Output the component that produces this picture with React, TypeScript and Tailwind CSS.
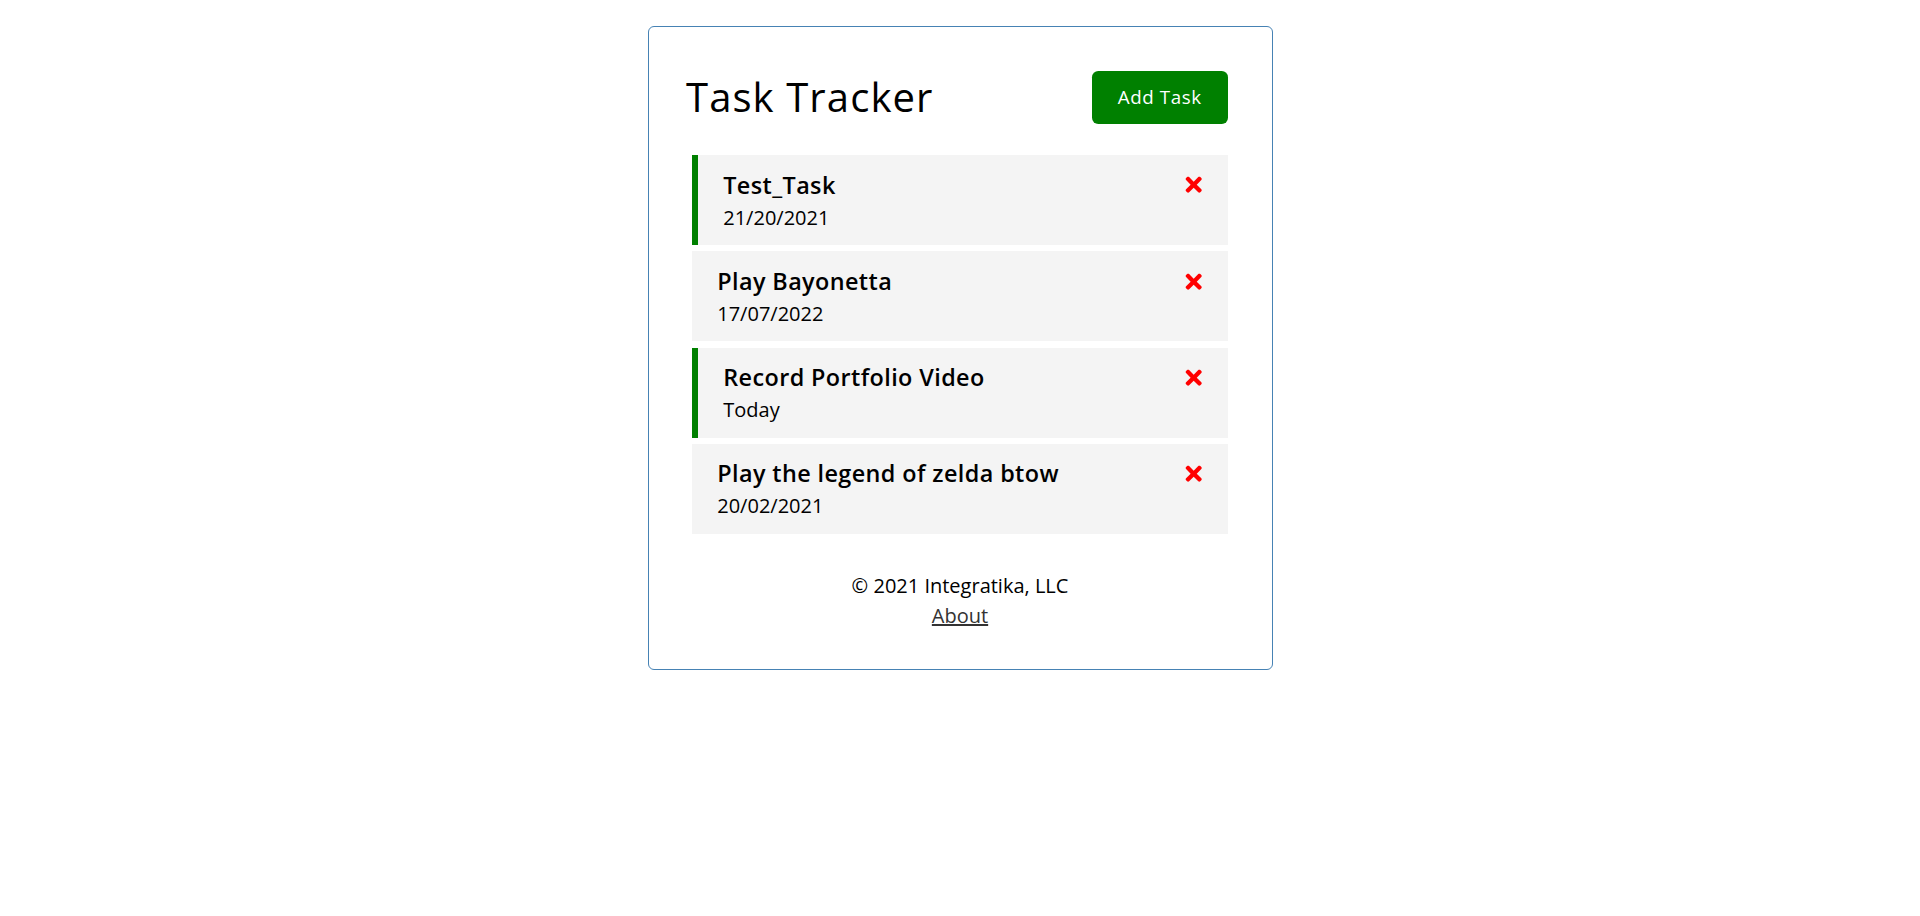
import React from "react";
import { FaTimes } from "react-icons/fa";

type Task = { id: number; text: string; day: string; reminder: boolean };

const tasks: Task[] = [
  { id: 1, text: "Test_Task", day: "21/20/2021", reminder: true },
  { id: 2, text: "Play Bayonetta", day: "17/07/2022", reminder: false },
  { id: 3, text: "Record Portfolio Video", day: "Today", reminder: true },
  { id: 4, text: "Play the legend of zelda btow", day: "20/02/2021", reminder: false },
];

export default function App() {
  return (
    <div className="min-h-[916px] bg-white text-black font-['Open_Sans','Noto_Sans',sans-serif]">
      <div className="w-[625px] mx-auto mt-[26px] border border-[#4682b4] rounded-[6px] p-[37.5px]">
        <header className="flex justify-between items-center mb-[25px]">
          <h1 className="text-[40px] leading-[60px] font-normal tracking-[1.1px]">Task Tracker</h1>
          <button className="m-[6.25px] w-[136px] h-[53px] bg-[#008000] text-white text-[18.75px] leading-[28px] tracking-[0.6px] rounded-[6.25px] cursor-pointer">
            Add Task
          </button>
        </header>
        <div className="flex flex-col gap-[6.25px] mx-[6.25px]">
          {tasks.map((t) => (
            <div
              key={t.id}
              className={
                t.reminder
                  ? "bg-[#f4f4f4] px-[25px] py-[12.5px] border-l-[6.25px] border-[#008000]"
                  : "bg-[#f4f4f4] px-[25px] py-[12.5px]"
              }
            >
              <h3 className="flex justify-between items-center text-[23.4px] leading-[35px] font-semibold tracking-[0.4px]">
                {t.text}
                <FaTimes className="text-[#ff0000] cursor-pointer -mr-[3px]" />
              </h3>
              <p className="text-[20px] leading-[30px]">{t.day}</p>
            </div>
          ))}
        </div>
        <footer className="mt-[37.5px] text-center text-[20px] leading-[30px]">
          <p>© 2021 Integratika, LLC</p>
          <a href="#" className="underline text-[#333]">
            About
          </a>
        </footer>
      </div>
    </div>
  );
}
